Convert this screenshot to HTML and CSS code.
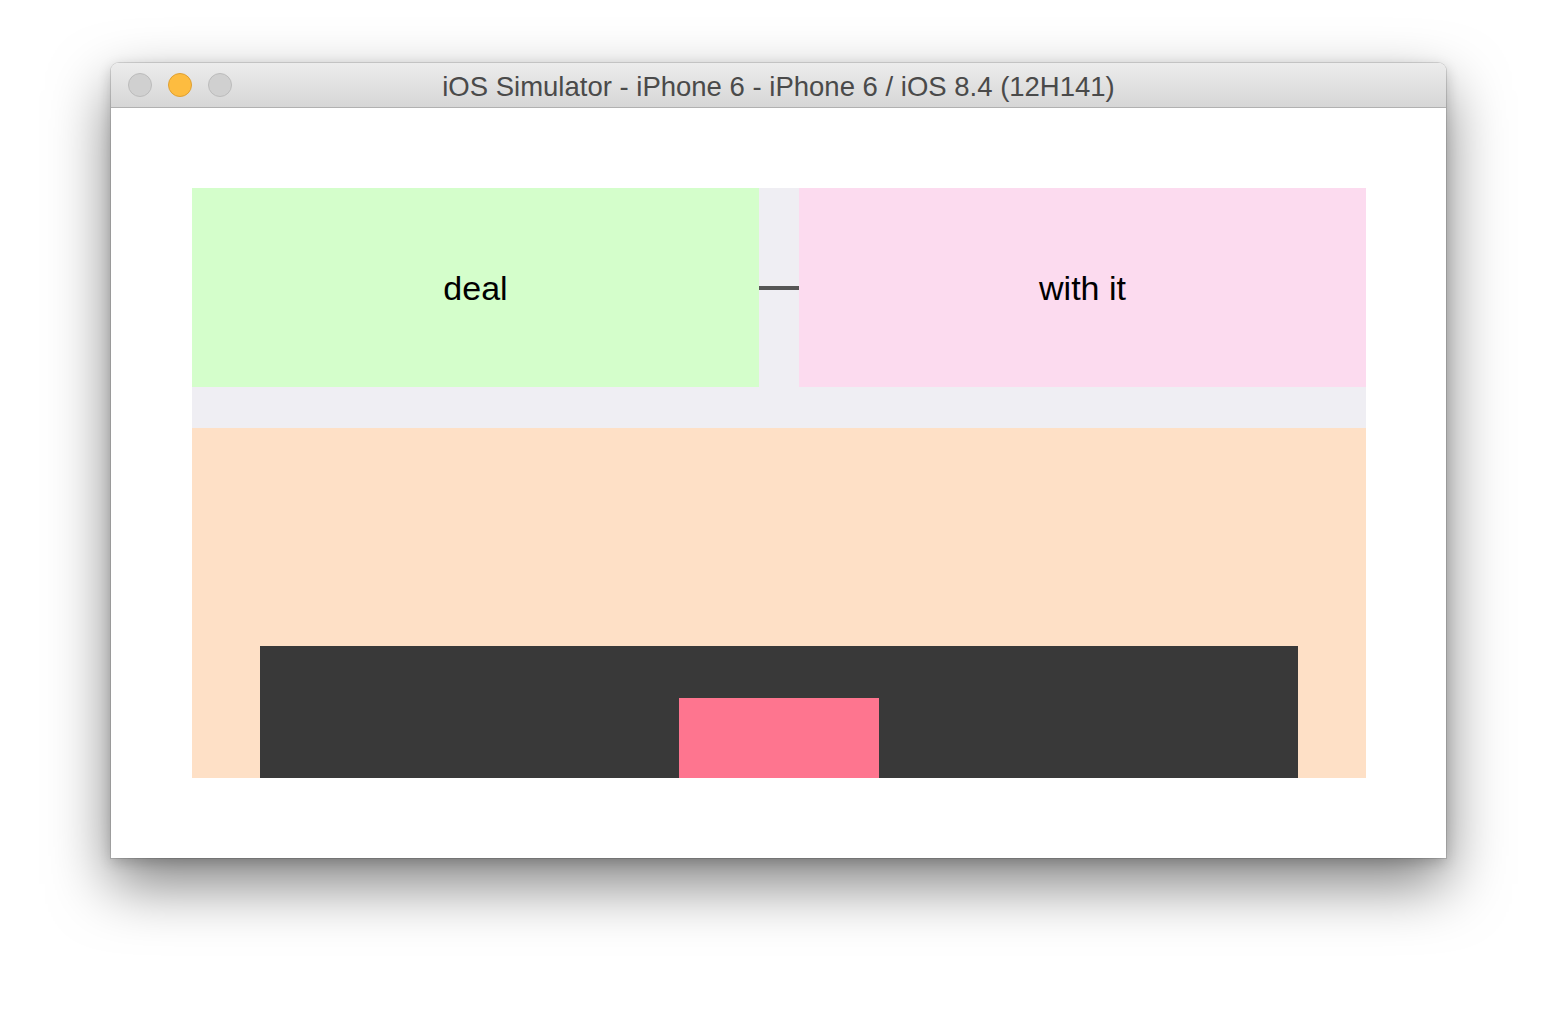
FILE: index.html
```html
<!DOCTYPE html>
<html>
<head>
<meta charset="utf-8">
<link rel="stylesheet" href="styles.css">
</head>
<body>
<div class="window">
  <div class="titlebar">
    <div class="lights">
      <span class="light light-grey"></span>
      <span class="light light-yellow"></span>
      <span class="light light-grey"></span>
    </div>
    <div class="title">iOS Simulator - iPhone 6 - iPhone 6 / iOS 8.4 (12H141)</div>
  </div>
  <div class="screen">
    <div class="stage">
      <div class="top-row">
        <div class="box box-green">deal</div>
        <div class="connector"><div class="connector-line"></div></div>
        <div class="box box-pink">with it</div>
      </div>
      <div class="bottom">
        <div class="dark">
          <div class="hot"></div>
        </div>
      </div>
    </div>
  </div>
</div>
</body>
</html>
```
FILE: styles.css
```css
html, body {
  margin: 0;
  padding: 0;
  background: #ffffff;
}
body {
  box-sizing: border-box;
  height: 1018px;
  padding: 63px 0 0 111px;
  font-family: "Liberation Sans", Arial, sans-serif;
}
.window {
  width: 1335px;
  height: 795px;
  border-radius: 8px 8px 0 0;
  box-shadow: 0 0 0 1px rgba(0,0,0,0.12), 0 26px 60px rgba(0,0,0,0.5), 0 4px 14px rgba(0,0,0,0.18);
  background: #fff;
  display: flex;
  flex-direction: column;
  overflow: hidden;
}
.titlebar {
  height: 44px;
  flex: none;
  background: linear-gradient(#ececec, #d6d6d6);
  border-bottom: 1px solid #b1b1b1;
  display: flex;
  align-items: center;
  position: relative;
}
.lights {
  display: flex;
  gap: 16px;
  padding-left: 17px;
}
.light {
  width: 24px;
  height: 24px;
  border-radius: 50%;
  box-sizing: border-box;
}
.light-grey {
  background: #d0d0d0;
  border: 1px solid #bcbcbc;
}
.light-yellow {
  background: #fdbc40;
  border: 1px solid #dfa032;
}
.title {
  position: absolute;
  left: 0;
  right: 0;
  top: 0;
  bottom: 0;
  display: flex;
  align-items: center;
  justify-content: center;
  font-size: 27.5px;
  color: #4a4a4a;
  padding-top: 4px;
}
.screen {
  flex: 1;
  background: #fff;
  padding: 80px 0 0 81px;
}
.stage {
  width: 1174px;
  height: 590px;
  display: flex;
  flex-direction: column;
}
.top-row {
  height: 240px;
  background: #efeef3;
  display: flex;
  align-items: flex-start;
}
.box {
  width: 567px;
  height: 199px;
  display: flex;
  align-items: center;
  justify-content: center;
  font-size: 34px;
  color: #000;
  padding-top: 2px;
  box-sizing: border-box;
}
.box-green { background: #d4fecb; }
.box-pink { background: #fcdbef; }
.connector {
  width: 40px;
  height: 199px;
  display: flex;
  align-items: center;
}
.connector-line {
  width: 40px;
  height: 4px;
  background: #555555;
}
.bottom {
  flex: 1;
  background: #fee0c6;
  display: flex;
  align-items: flex-end;
  justify-content: center;
}
.dark {
  width: 1038px;
  height: 132px;
  background: #393939;
  display: flex;
  align-items: flex-end;
  justify-content: center;
}
.hot {
  width: 200px;
  height: 80px;
  background: #fe758f;
}
```
